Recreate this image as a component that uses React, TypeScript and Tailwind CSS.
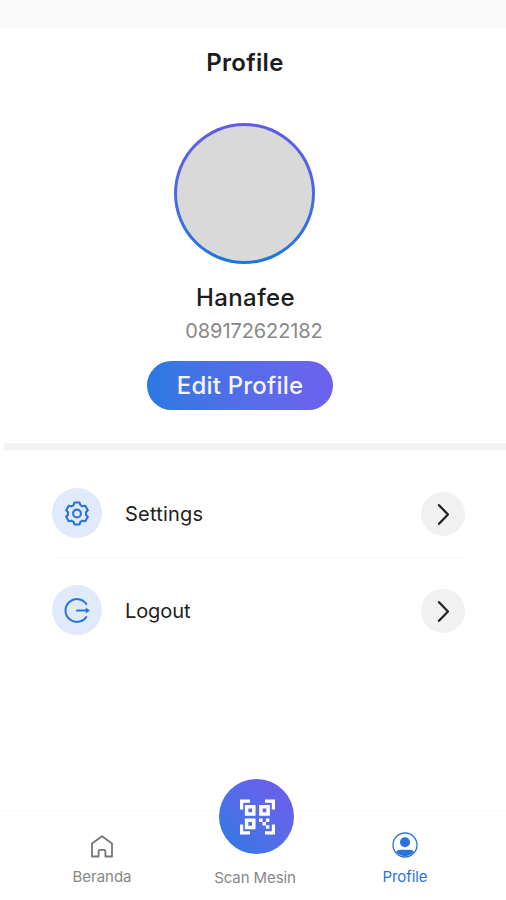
import type { ReactNode } from "react";

function gearOutline() {
  const points: string[] = [];
  for (let tooth = 0; tooth < 6; tooth++) {
    for (const [offset, radius] of [[-22, 9.1], [-13, 11.3], [13, 11.3], [22, 9.1]]) {
      const angle = ((tooth * 60 - 90 + offset) * Math.PI) / 180;
      points.push(`${(13 + radius * Math.cos(angle)).toFixed(2)},${(13.5 + radius * Math.sin(angle)).toFixed(2)}`);
    }
  }
  return points.join(" ");
}

function GearIcon() {
  return (
    <svg className="size-[26px]" viewBox="0 0 26 26" fill="none" stroke="#2a73dc" strokeWidth="2.1" strokeLinejoin="round">
      <polygon points={gearOutline()} />
      <circle cx="13" cy="13.5" r="3.9" />
    </svg>
  );
}

function LogoutIcon() {
  return (
    <svg className="size-[26px]" viewBox="0 0 26 26" fill="none" stroke="#2a73dc" strokeWidth="2">
      <path d="M22.2 6.9A11.4 11.4 0 1 0 22.2 20.1" strokeLinecap="round" />
      <path d="M12.2 13.5H23" />
      <path d="M21.8 10.6 25.9 13.5l-4.1 2.9Z" fill="#2a73dc" stroke="none" />
    </svg>
  );
}

function HomeIcon() {
  return (
    <svg className="size-6" viewBox="0 0 24 24" fill="none" stroke="#777" strokeWidth="1.8" strokeLinejoin="round">
      <path d="M2 9.4 12 2.2 22 9.4v13.1h-6.6v-5.3q0-1.4-1.4-1.4h-4q-1.4 0-1.4 1.4v5.3H2Z" />
    </svg>
  );
}

function ScanIcon() {
  return (
    <svg className="h-9 w-[35px]" viewBox="0 0 35 36" fill="none" stroke="#fff">
      <path strokeWidth="3.2" d="M1.6 10.5V2.1H10M25 2.1h8.4v8.4M1.6 25.5v8.4H10M25 33.9h8.4v-8.4" />
      <path strokeWidth="3.5" d="M6.6 7.7h7.2v7.2H6.6ZM20.9 7.7h7.2v7.2h-7.2ZM6.6 21.2h7.2v7.2H6.6Z" />
      <path
        fill="#fff"
        stroke="none"
        d="M19.1 19.5h3.5V23h-3.5ZM25.9 19.5h3.5V23h-3.5ZM22.5 22.9H26v3.5h-3.5ZM25.9 26.3h3.5v3.5h-3.5Z"
      />
    </svg>
  );
}

function ProfileIcon() {
  return (
    <svg className="size-[26px]" viewBox="0 0 26 26" fill="none">
      <circle cx="13" cy="13" r="12" stroke="#2a73dc" strokeWidth="1.3" />
      <circle cx="13" cy="10.2" r="5" fill="#2a73dc" />
      <path d="M4 19.8q1.6-2 4.2-2h9.6q2.6 0 4.2 2A11.5 11.5 0 0 1 4 19.8Z" fill="#2a73dc" />
    </svg>
  );
}

function MenuRow({ icon, label }: { icon: ReactNode; label: ReactNode }) {
  return (
    <button className="flex h-[50px] w-full items-center text-left">
      <span className="flex size-[50px] items-center justify-center rounded-full bg-[#e0eafb]">{icon}</span>
      <span className="mt-px ml-[23px] flex-1 text-[20px] leading-6 text-[#222]">{label}</span>
      <span className="mt-[2px] flex size-11 items-center justify-center rounded-full bg-[#f1f1f1]">
        <svg className="h-6 w-3" viewBox="0 0 12 24" fill="none" stroke="#222" strokeWidth="2.3">
          <path d="m2 3.2 9 9.3-9 9.3" strokeLinecap="round" />
        </svg>
      </span>
    </button>
  );
}

export default function App() {
  return (
    <main className="flex h-[900px] w-[506px] flex-col overflow-hidden bg-white font-['Inter',sans-serif]">
      <div className="h-7 shrink-0 bg-[#fafafa]" />
      <section className="flex h-[415px] w-[490px] shrink-0 flex-col items-center">
        <h1 className="mt-5 text-[24px] leading-[30px] font-semibold tracking-[0.3px] text-[#1c1c1c]">Profile</h1>
        <div className="mt-[45px] mr-px size-[141px] rounded-full bg-linear-to-b from-[#6259e8] to-[#1877dc] p-[3px]">
          <div className="size-full rounded-full bg-[#d9d9d9]" />
        </div>
        <h2 className="mt-[19px] ml-px text-[24px] leading-[30px] font-medium tracking-[0.4px] text-[#1c1c1c]">Hanafee</h2>
        <p className="mt-[6px] ml-[18px] text-[20px] leading-6 tracking-[-0.1px] text-[#888]">089172622182</p>
        <button className="mt-[18px] mr-[10px] flex h-[49px] w-[186px] items-center justify-center rounded-full bg-linear-to-r from-[#2879e2] to-[#6d61ee] text-[24px] leading-[30px] font-medium tracking-[0.2px] text-[#f4f6ff]">
          Edit Profile
        </button>
      </section>
      <div className="ml-1 h-[7px] shrink-0 bg-[#f2f2f2]" />
      <section className="mt-[38px] ml-[52px] w-[413px]">
        <MenuRow icon={<GearIcon />} label={<span className="tracking-[0.2px]">Settings</span>} />
        <div className="mt-[19px] mb-[27px] h-px bg-[#f7f7f7]" />
        <MenuRow icon={<LogoutIcon />} label={<span className="tracking-[-0.1px]">Logout</span>} />
      </section>
      <nav className="mt-auto flex h-[90px] shrink-0 border-t border-[#fafafa] text-[15px] leading-5 text-[#888]">
        <button className="ml-[52px] flex w-[100px] flex-col items-center">
          <span className="mt-[23px]"><HomeIcon /></span>
          <span className="mt-[9px]">Beranda</span>
        </button>
        <button className="-mt-8 ml-[52px] flex w-[102px] flex-col items-center">
          <span className="ml-[3px] flex size-[75px] shrink-0 items-center justify-center rounded-full bg-linear-to-tr from-[#227be2] to-[#7159ee]">
            <span className="mt-px ml-px"><ScanIcon /></span>
          </span>
          <span className="mt-[14px] tracking-[-0.1px]">Scan Mesin</span>
        </button>
        <button className="ml-[49px] flex w-[100px] flex-col items-center text-[#2a73dc]">
          <span className="mt-[21px]"><ProfileIcon /></span>
          <span className="mt-[9px] tracking-[-0.1px]">Profile</span>
        </button>
      </nav>
    </main>
  );
}
